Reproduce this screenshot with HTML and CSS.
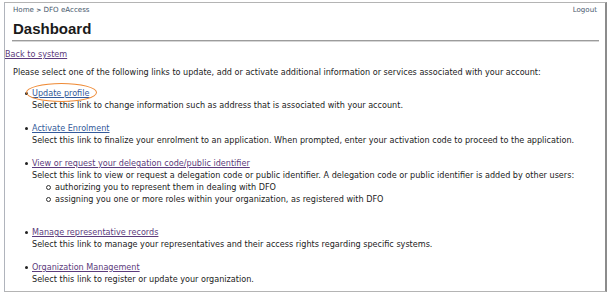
FILE: index.html
```html
<!DOCTYPE html>
<html lang="en">
<head>
<meta charset="utf-8">
<title>Dashboard</title>
<link rel="stylesheet" href="styles.css">
</head>
<body>
<div class="frame">
  <div class="topbar">
    <div class="crumbs"><a href="#">Home</a> <span class="sep">&gt;</span> DFO eAccess</div>
    <a class="logout" href="#">Logout</a>
  </div>
  <h1 class="title">Dashboard</h1>
  <div class="rule"></div>
  <a class="back visited" href="#">Back to system</a>
  <p class="intro">Please select one of the following links to update, add or activate additional information or services associated with your account:</p>
  <ul class="links">
    <li>
      <span class="circled"><a href="#">Update profile</a></span>
      <div class="desc">Select this link to change information such as address that is associated with your account.</div>
    </li>
    <li>
      <a href="#">Activate Enrolment</a>
      <div class="desc">Select this link to finalize your enrolment to an application. When prompted, enter your activation code to proceed to the application.</div>
    </li>
    <li class="tall">
      <a class="visited" href="#">View or request your delegation code/public identifier</a>
      <div class="desc">Select this link to view or request a delegation code or public identifier. A delegation code or public identifier is added by other users:</div>
      <ul class="sub">
        <li>authorizing you to represent them in dealing with DFO</li>
        <li>assigning you one or more roles within your organization, as registered with DFO</li>
      </ul>
    </li>
    <li>
      <a class="visited" href="#">Manage representative records</a>
      <div class="desc">Select this link to manage your representatives and their access rights regarding specific systems.</div>
    </li>
    <li>
      <a class="visited" href="#">Organization Management</a>
      <div class="desc">Select this link to register or update your organization.</div>
    </li>
  </ul>
</div>
</body>
</html>
```
FILE: styles.css
```css
html, body {
  margin: 0;
  padding: 0;
  background: #fff;
}
body {
  width: 613px;
  height: 295px;
  overflow: hidden;
  font-family: "DejaVu Sans", Verdana, sans-serif;
  font-size: 8.1px;
  color: #222;
}
.frame {
  margin: 2px 0 0 4px;
  width: 603px;
  height: 290px;
  border-top: 1px solid #b4b4b4;
  border-left: 1px solid #b0b4bc;
  border-right: 2px solid #8c8c8c;
  border-bottom: 1px solid #b4b4b4;
  box-sizing: border-box;
}
a {
  color: #33599a;
  text-decoration: underline;
}
a.visited {
  color: #5c3b7c;
}
.topbar {
  display: flex;
  justify-content: space-between;
  align-items: center;
  padding: 2px 8px 0 8px;
  height: 9px;
  line-height: 9px;
  font-size: 7.1px;
  color: #4a5a6e;
}
.topbar a {
  color: #4a5a6e;
  text-decoration: none;
}
.sep {
  font-size: 6px;
  font-weight: bold;
}
.title {
  margin: 6px 0 0 8px;
  font-family: "Liberation Sans", Arial, sans-serif;
  font-size: 15px;
  font-weight: bold;
  line-height: 18px;
  color: #1a1a1a;
}
.rule {
  margin: 2px 6px 0 7px;
  height: 0;
  border-top: 1px solid #9c9c9c;
  border-bottom: 1px solid #d6d6d6;
}
.back {
  display: inline-block;
  margin: 6px 0 0 0;
  line-height: 12px;
}
.intro {
  margin: 6px 0 0 8px;
  line-height: 12px;
}
.links {
  margin: 9px 0 0 0;
  padding: 0 0 0 27px;
  list-style: none;
  line-height: 12px;
}
.links > li {
  position: relative;
  margin-bottom: 11px;
}
.links > li::before {
  content: "";
  position: absolute;
  left: -7px;
  top: 5px;
  width: 3px;
  height: 3px;
  border-radius: 50%;
  background: #222;
}
.links > li.tall {
  margin-bottom: 21px;
}
.circled {
  position: relative;
}
.circled::after {
  content: "";
  position: absolute;
  left: -6px;
  right: -8px;
  top: -5px;
  bottom: -4px;
  border: 1.5px solid #ef8a35;
  border-radius: 50%;
}
.sub {
  margin: 0;
  padding: 0 0 0 23px;
  list-style: none;
}
.sub li {
  position: relative;
}
.sub li::before {
  content: "";
  position: absolute;
  left: -9px;
  top: 4px;
  width: 3px;
  height: 3px;
  border: 1px solid #333;
  border-radius: 50%;
}
```
